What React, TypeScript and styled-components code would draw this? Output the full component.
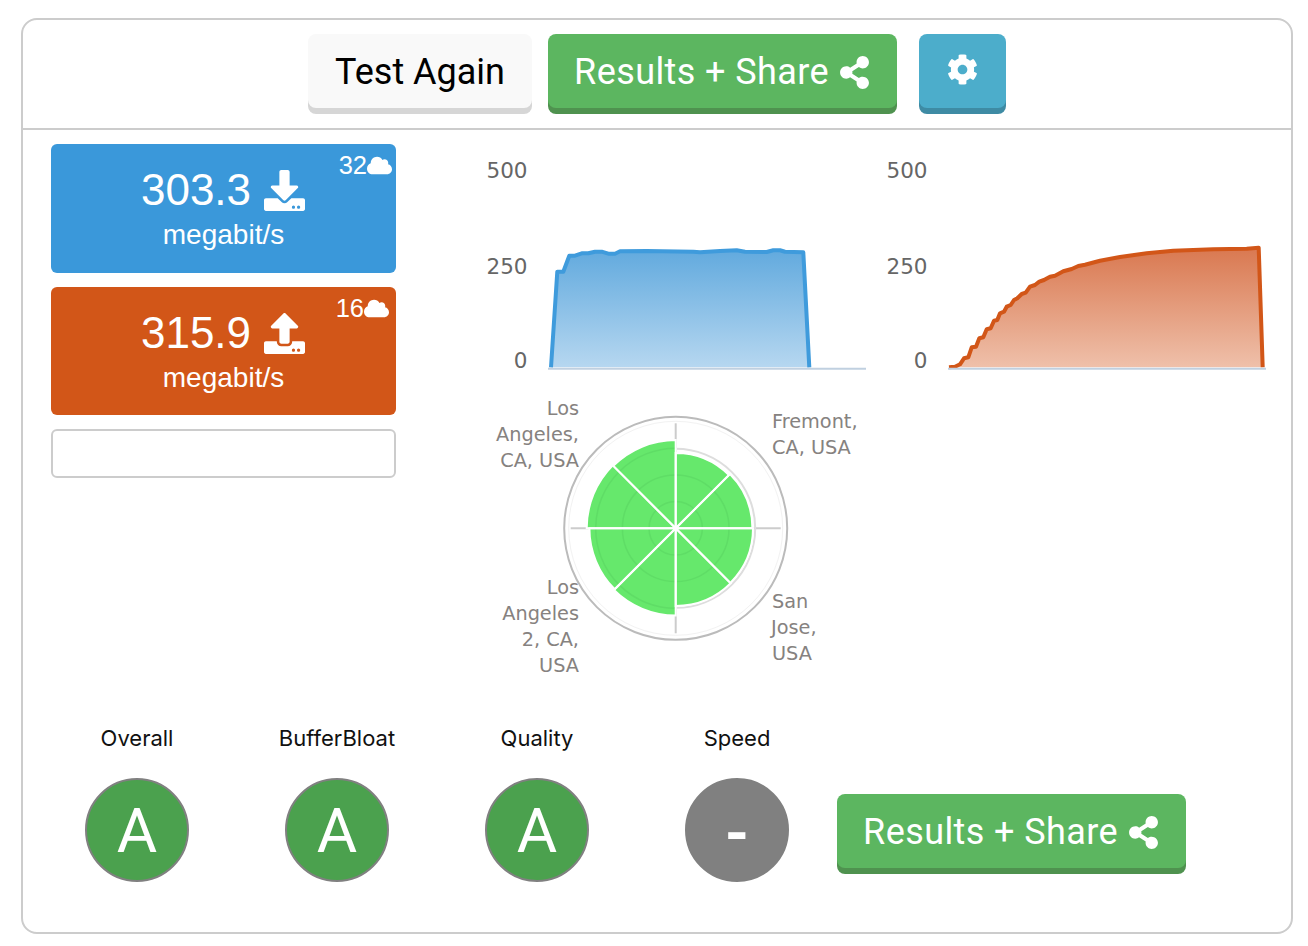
import React from 'react';
import styled, {createGlobalStyle} from 'styled-components';
import {FaCloud, FaCog, FaDownload, FaShareAlt, FaUpload} from 'react-icons/fa';

const Global = createGlobalStyle`
  html, body {
    margin: 0;
    padding: 0;
    background: #fff;
  }
  * {
    box-sizing: border-box;
  }
`;

const Panel = styled.div`
  width: 1272px;
  height: 916px;
  margin: 18px 0 0 21px;
  border: 2px solid #ccc;
  border-radius: 16px;
`;

const Header = styled.div`
  display: flex;
  justify-content: center;
  height: 110px;
  padding: 14px 0 0 0;
  border-bottom: 2px solid #ccc;
`;

const Button = styled.button<{$bg: string; $edge: string; $color?: string; $left?: number; $width: number; $spacing?: number}>`
  display: flex;
  align-items: center;
  justify-content: center;
  width: ${props => props.$width}px;
  height: 74px;
  margin-left: ${props => props.$left || 0}px;
  padding: 2px 0 0 0;
  border: none;
  border-radius: 8px;
  background: ${props => props.$bg};
  box-shadow: 0 6px 0 ${props => props.$edge};
  color: ${props => props.$color || '#fff'};
  font-family: Roboto, sans-serif;
  font-size: 36px;
  letter-spacing: ${props => props.$spacing || 0}px;
  svg {
    margin-left: 9px;
  }
`;

const GearButton = styled(Button)`
  padding: 0 0 4px 0;
  svg {
    margin-left: 0;
  }
`;

const Body = styled.div`
  display: flex;
`;

const LeftColumn = styled.div`
  width: 345px;
  margin: 14px 0 0 28px;
`;

const StatCard = styled.div<{$bg: string; $height: number}>`
  position: relative;
  display: flex;
  flex-direction: column;
  align-items: center;
  height: ${props => props.$height}px;
  margin-bottom: 14px;
  padding-top: 21px;
  border-radius: 6px;
  background: ${props => props.$bg};
  color: #fff;
  font-family: "Liberation Sans", Arial, sans-serif;
`;

const StatValue = styled.div`
  display: flex;
  align-items: center;
  height: 50px;
  margin-left: -1px;
  font-size: 44px;
  svg {
    margin-left: 13px;
  }
`;

const StatUnit = styled.div`
  margin-top: 2px;
  font-size: 28px;
  line-height: 36px;
`;

const Streams = styled.div<{$right: number}>`
  position: absolute;
  top: 7px;
  right: ${props => props.$right}px;
  display: flex;
  align-items: center;
  font-size: 25.5px;
  line-height: 28px;
`;

const EmptyBox = styled.div`
  height: 49px;
  border: 2px solid #ccc;
  border-radius: 6px;
`;

const ChartColumn = styled.div`
  margin: 20px 0 0 84px;
`;

const ChartRow = styled.div`
  display: flex;
`;

const ChartSvg = styled.svg`
  display: block;
  width: 400px;
  height: 235px;
`;

const RadarSvg = styled.svg`
  display: block;
  width: 380px;
  height: 290px;
  margin: 5px 0 0 10px;
`;

const AxisText = styled.text`
  fill: #666;
  font-family: "DejaVu Sans", Verdana, sans-serif;
  font-size: 21.5px;
  text-anchor: end;
`;

const RadarText = styled.text<{$end?: boolean}>`
  fill: #868280;
  font-family: "DejaVu Sans", Verdana, sans-serif;
  font-size: 19.3px;
  text-anchor: ${props => (props.$end ? 'end' : 'start')};
`;

const GradeRow = styled.div`
  display: flex;
  align-items: flex-end;
  margin: 43px 0 0 14px;
`;

const GradeCell = styled.div`
  display: flex;
  flex-direction: column;
  align-items: center;
  width: 200px;
`;

const GradeLabel = styled.div`
  margin-bottom: 25px;
  color: #111;
  font-family: Inter, Roboto, sans-serif;
  font-size: 22px;
  line-height: 30px;
`;

const GradeCircle = styled.div<{$bg: string; $bold?: boolean}>`
  display: flex;
  align-items: center;
  justify-content: center;
  width: 104px;
  height: 104px;
  padding-top: ${props => (props.$bold ? 5 : 0)}px;
  border: 2px solid #808080;
  border-radius: 50%;
  background: ${props => props.$bg};
  color: #fff;
  font-family: Roboto, sans-serif;
  font-size: 62px;
  font-weight: ${props => (props.$bold ? 700 : 400)};
`;

const BottomShare = styled.div`
  margin-bottom: 14px;
`;

const BLUE_LINE = [
  [213, 652], [232, 365], [250, 365], [268, 317], [285, 317], [305, 310], [325, 310], [345, 305],
  [365, 305], [385, 311], [405, 311], [420, 304], [500, 303], [640, 305], [660, 307], [720, 303],
  [770, 301], [795, 305], [860, 306], [880, 301], [900, 301], [915, 305], [970, 307], [988, 652],
];

const ORANGE_LINE = [
  [207, 652], [225, 650], [240, 643], [252, 625], [265, 622], [275, 592], [288, 590], [298, 565],
  [310, 562], [320, 538], [332, 535], [342, 512], [352, 510], [360, 490], [372, 485], [380, 470],
  [392, 465], [402, 450], [412, 445], [425, 432], [437, 428], [450, 410], [465, 405], [478, 395],
  [492, 390], [510, 380], [525, 377], [550, 364], [575, 357], [595, 348], [615, 344], [660, 332],
  [720, 321], [800, 310], [880, 302], [1000, 298], [1100, 296], [1136, 293], [1148, 652],
];

// points were read off a 3x crop
const toPoints = (line: number[][]) => line.map(p => `${(p[0] / 3).toFixed(1)},${(p[1] / 3).toFixed(1)}`).join(' ');

type ChartProps = {
    id: string
    line: number[][]
    color: string
    top: string
    bottom: string
}

const Chart = (props: ChartProps) => {
    return (
        <ChartSvg viewBox="0 0 400 235">
            <defs>
                <linearGradient id={props.id} x1="0" y1="0" x2="0" y2="1">
                    <stop offset="0" stopColor={props.top}/>
                    <stop offset="1" stopColor={props.bottom}/>
                </linearGradient>
            </defs>
            <AxisText x="47.5" y="28">500</AxisText>
            <AxisText x="47.5" y="124">250</AxisText>
            <AxisText x="47.5" y="218">0</AxisText>
            <polygon points={toPoints(props.line)} fill={`url(#${props.id})`}/>
            <polyline points={toPoints(props.line)} fill="none" stroke={props.color} strokeWidth="4" strokeLinejoin="round"/>
            <line x1="68" y1="218.7" x2="386" y2="218.7" stroke="#c0d0e0" strokeWidth="2"/>
        </ChartSvg>
    );
};

const CX = 185.7;
const CY = 138.3;
const SECTORS = [75.3, 76.7, 77.3, 77.7, 87.3, 86.3, 89, 88.3];

const sectorPath = (index: number, r: number) => {
    const a = (index * Math.PI) / 4;
    const b = ((index + 1) * Math.PI) / 4;
    const x1 = CX + r * Math.sin(a);
    const y1 = CY - r * Math.cos(a);
    const x2 = CX + r * Math.sin(b);
    const y2 = CY - r * Math.cos(b);
    return `M${CX} ${CY}L${x1} ${y1}A${r} ${r} 0 0 1 ${x2} ${y2}Z`;
};

const Radar = () => {
    return (
        <RadarSvg viewBox="0 0 380 290">
            <circle cx={CX} cy={CY} r="111.5" fill="#fff" stroke="#bbb" strokeWidth="2"/>
            <circle cx={CX} cy={CY} r="107" fill="none" stroke="#f2f2f2" strokeWidth="1"/>
            <line x1={CX} y1={CY - 105} x2={CX} y2={CY + 105} stroke="#ccc" strokeWidth="2"/>
            <line x1={CX - 105} y1={CY} x2={CX + 105} y2={CY} stroke="#ccc" strokeWidth="2"/>
            <circle cx={CX} cy={CY} r="79.5" fill="none" stroke="#ddd" strokeWidth="2"/>
            {SECTORS.map((r, i) => (
                <path key={i} d={sectorPath(i, r)} fill="#66e86c"/>
            ))}
            <circle cx={CX} cy={CY} r="26.7" fill="none" stroke="#5fdd66" strokeWidth="1.5"/>
            <circle cx={CX} cy={CY} r="53.3" fill="none" stroke="#5fdd66" strokeWidth="1.5"/>
            <path d={`M${CX - 80} ${CY}A80 80 0 0 1 ${CX} ${CY - 80}`} fill="none" stroke="#5fdd66" strokeWidth="1.5"/>
            <path d={`M${CX - 80} ${CY}A80 80 0 0 0 ${CX} ${CY + 80}`} fill="none" stroke="#5fdd66" strokeWidth="1.5"/>
            {SECTORS.map((r, i) => (
                <path key={i} d={sectorPath(i, r)} fill="none" stroke="#fff" strokeWidth="2"/>
            ))}
            <RadarText $end x="89" y="25">Los</RadarText>
            <RadarText $end x="89" y="51">Angeles,</RadarText>
            <RadarText $end x="89" y="77">CA, USA</RadarText>
            <RadarText x="282" y="38">Fremont,</RadarText>
            <RadarText x="282" y="64">CA, USA</RadarText>
            <RadarText x="282" y="218">San</RadarText>
            <RadarText x="281" y="244">Jose,</RadarText>
            <RadarText x="282" y="270">USA</RadarText>
            <RadarText $end x="89" y="204">Los</RadarText>
            <RadarText $end x="89" y="230">Angeles</RadarText>
            <RadarText $end x="89" y="256">2, CA,</RadarText>
            <RadarText $end x="89" y="282">USA</RadarText>
        </RadarSvg>
    );
};

const ShareButton = (props: {left?: number}) => {
    return (
        <Button $bg="#5cb660" $edge="#4f924f" $left={props.left} $width={349} $spacing={0.4}>
            Results + Share <FaShareAlt size={33}/>
        </Button>
    );
};

const GRADES = [
    {label: 'Overall', value: 'A'},
    {label: 'BufferBloat', value: 'A'},
    {label: 'Quality', value: 'A'},
    {label: 'Speed', value: '-'},
];

export default function App() {
    return (
        <>
            <Global/>
            <Panel>
                <Header>
                    <Button $bg="#f9f9f9" $edge="#d6d6d6" $color="#000" $width={224}>Test Again</Button>
                    <ShareButton left={16}/>
                    <GearButton $bg="#4cadcb" $edge="#3e8ba4" $left={22} $width={87}><FaCog size={31}/></GearButton>
                </Header>
                <Body>
                    <LeftColumn>
                        <StatCard $bg="#3a98da" $height={129}>
                            <Streams $right={4}>32<FaCloud size={25}/></Streams>
                            <StatValue>303.3<FaDownload size={41}/></StatValue>
                            <StatUnit>megabit/s</StatUnit>
                        </StatCard>
                        <StatCard $bg="#d25618" $height={128}>
                            <Streams $right={7}>16<FaCloud size={25}/></Streams>
                            <StatValue>315.9<FaUpload size={41}/></StatValue>
                            <StatUnit>megabit/s</StatUnit>
                        </StatCard>
                        <EmptyBox/>
                    </LeftColumn>
                    <ChartColumn>
                        <ChartRow>
                            <Chart id="down" line={BLUE_LINE} color="#3f9bdc" top="#62aade" bottom="#b6d7f0"/>
                            <Chart id="up" line={ORANGE_LINE} color="#d25618" top="#d97850" bottom="#efc0aa"/>
                        </ChartRow>
                        <Radar/>
                    </ChartColumn>
                </Body>
                <GradeRow>
                    {GRADES.map(g => (
                        <GradeCell key={g.label}>
                            <GradeLabel>{g.label}</GradeLabel>
                            <GradeCircle $bg={g.value === 'A' ? '#4ba14e' : '#808080'} $bold={g.value !== 'A'}>
                                {g.value}
                            </GradeCircle>
                        </GradeCell>
                    ))}
                    <BottomShare><ShareButton/></BottomShare>
                </GradeRow>
            </Panel>
        </>
    );
}
